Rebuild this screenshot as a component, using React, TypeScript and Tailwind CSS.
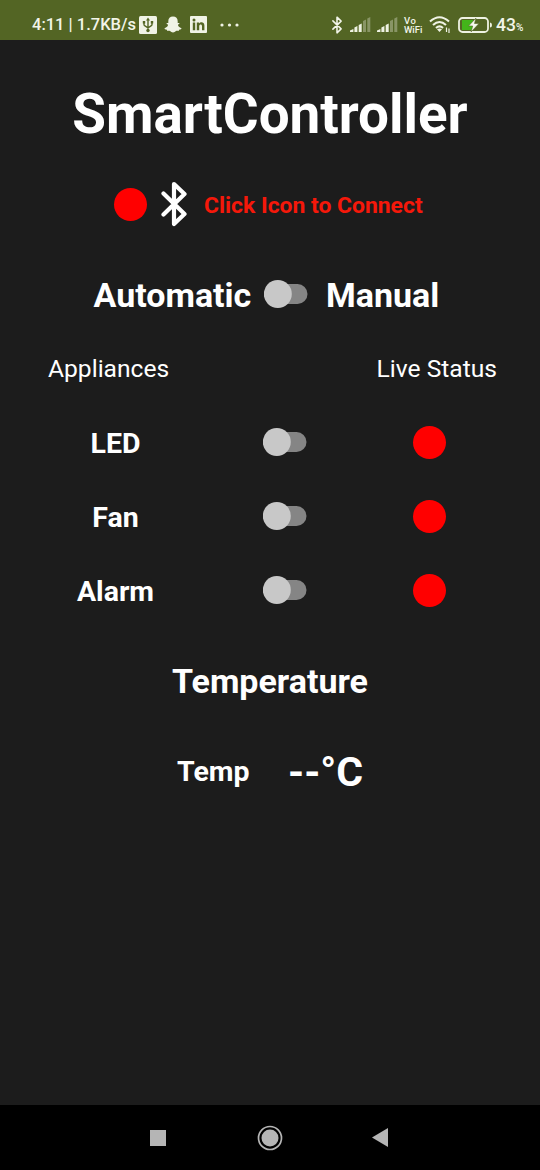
import React from "react";

const Bluetooth = ({ className, sw = 2 }: { className: string; sw?: number }) => (
  <svg className={className} viewBox="0 0 26 46" fill="none" stroke="currentColor" strokeWidth={sw} strokeLinecap="round" strokeLinejoin="round">
    <path d="M2.5 12.5 L23.5 33 L13 43 V3 L23.5 13 L2.5 33.5" />
  </svg>
);

const Dot = () => <span className="block h-[33px] w-[33px] shrink-0 rounded-full bg-[#ff0000]" />;

const Switch = () => (
  <button type="button" role="switch" aria-checked="false" aria-label="switch" className="flex h-7 w-11 shrink-0 items-center">
    <svg className="h-7 w-11" viewBox="0 0 44 28">
      <rect x="8" y="4" width="35.5" height="20" rx="10" fill="#858585" />
      <circle cx="13.8" cy="14" r="14" fill="#c8c8c8" />
    </svg>
  </button>
);

const Signal = () => (
  <svg className="h-[15px] w-[21px] shrink-0" viewBox="0 0 21 15" fill="#eef2e2">
    <path d="M0 15v-1.5L3.4 12v3zM4.4 15v-4.500l3-1.500v6zM8.700 15V8l3-1.500V15z" />
    <path d="M13 15V4l3-1.500V15zM17.300 15V1.500l3-1.500v15z" opacity=".35" />
  </svg>
);

const StatusBar = () => (
  <header className="flex h-10 items-center bg-[#536524] pt-[9px] pl-8 text-[#f2f5e9]">
    <span className="w-[107px] pt-px text-[16.500px] leading-5 font-medium whitespace-nowrap">4:11 | 1.7KB/s</span>
    <svg className="h-[18px] w-[18px] shrink-0" viewBox="0 0 18 18">
      <rect width="18" height="18" rx="1.5" fill="#f0f3e6" />
      <g fill="none" stroke="#536524" strokeWidth="1.4">
        <path d="M9 3v11M5 6v2.400q0 1 1 1.500L9 11.800l3-1.900q1-.5 1-1.500V6" />
      </g>
      <path d="M9 1.500l2 3H7zM3.800 5h2.400v2.400H3.800zM11.800 5h2.400v2.400h-2.400z" fill="#536524" />
      <circle cx="9" cy="14.5" r="1.700" fill="#536524" />
    </svg>
    <svg className="ml-[7px] h-[17px] w-[18px] shrink-0" viewBox="0 0 18 17" fill="#f0f3e6">
      <path d="M9 .5c3 0 4.7 2 4.7 4.8v1.6c.7.1 1.7-.2 1.8.4.1.7-1.2 1-1.5 1.5-.2 1.5 1.5 2.9 3.4 3.4.5.9-.8 1.3-2.3 1.6-.3.5-.1 1-.8 1.1-.9 0-1.6-.2-2.3.2-1 .6-1.7 1.4-3 1.4s-2-.8-3-1.4c-.7-.4-1.4-.2-2.3-.2-.7-.1-.5-.6-.8-1.1C1.400 13.500.1 13.100.6 12.200c1.900-.5 3.600-1.900 3.400-3.400-.3-.5-1.600-.8-1.500-1.500.1-.6 1.100-.3 1.800-.4V5.300C4.300 2.500 6 .5 9 .5z" />
    </svg>
    <svg className="ml-2 h-[17px] w-[17px] shrink-0" viewBox="0 0 17 17">
      <rect width="17" height="17" rx="1" fill="#f0f3e6" />
      <g fill="#536524">
        <circle cx="4" cy="4" r="1.5" />
        <path d="M2.800 6.500h2.400v7.800H2.800zM6.800 6.500h2.300v1.100c1.400-2 5.300-1.800 5.300 2v4.700H12V10c0-2.200-2.800-2-2.800 0v4.300H6.800z" />
      </g>
    </svg>
    <svg className="ml-[13px] h-1 w-[19px] shrink-0" viewBox="0 0 19 4" fill="#f0f3e6">
      <circle cx="2" cy="2" r="1.600" />
      <circle cx="9.500" cy="2" r="1.600" />
      <circle cx="17" cy="2" r="1.600" />
    </svg>
    <Bluetooth className="ml-[92px] h-[18px] w-3 shrink-0" sw={4} />
    <div className="ml-[7px] flex gap-[6px]">
      <Signal />
      <Signal />
    </div>
    <span className="ml-1.5 flex w-5 shrink-0 flex-col text-[9.500px] leading-[9px] font-medium">
      <span className="tracking-[0.500px]">Vo</span>
      <span>WiFi</span>
    </span>
    <svg className="ml-[5px] h-[17px] w-[22px] shrink-0" viewBox="0 0 22 17" fill="none" stroke="#f0f3e6" strokeWidth="2.100">
      <path d="M1 5.500Q10.500-3 20 5.500M4 9Q10.500 3 17 9M7 12Q10.500 8.800 14 12" />
      <path d="M8 13.300Q10.500 11.500 13 13.300L10.500 16z" fill="#f0f3e6" stroke="none" />
      <path d="M17.500 11.500v4.500M20 12.500v4.500" strokeWidth="1.200" />
    </svg>
    <svg className="ml-[7px] h-4 w-[35px] shrink-0" viewBox="0 0 35 16">
      <rect x="4" y="3" width="11" height="10" fill="#43b51a" />
      <rect x="1" y="1" width="29" height="14" rx="3.500" fill="none" stroke="#eef2e2" strokeWidth="1.800" />
      <path d="M32 5.500q2 0 2 2.500T32 10.500z" fill="#eef2e2" />
      <path d="M18 1L10.500 9h4.200L13 15l8-8.500h-4.500z" fill="#f5f8ee" stroke="#536524" strokeWidth=".6" />
    </svg>
    <span className="ml-[3px] flex items-baseline text-[17.500px] leading-5 font-medium whitespace-nowrap">
      43<span className="text-[10px] leading-3">%</span>
    </span>
  </header>
);

export default function App() {
  return (
    <div className="flex h-[1170px] w-[540px] flex-col overflow-hidden bg-[#1c1c1c] font-['Roboto',sans-serif] text-white">
      <StatusBar />
      <main className="flex flex-1 flex-col">
        <h1 className="mt-[38px] text-center text-[54.800px] leading-[72px] font-bold">SmartController</h1>
        <div className="mt-[30px] flex h-12 items-center pl-[114px]">
          <Dot />
          <Bluetooth className="ml-[14px] h-[46px] w-[26px] shrink-0" sw={4.2} />
          <span className="ml-[17px] pt-[3px] text-[22.900px] leading-6 font-bold whitespace-nowrap text-[#f5180a]">Click Icon to Connect</span>
        </div>
        <div className="mt-[42px] flex h-12 items-center pl-[93.500px] text-[34px] leading-10 font-bold">
          <span className="w-[170px] pt-0.5">Automatic</span>
          <Switch />
          <span className="ml-[18.500px] pt-0.5">Manual</span>
        </div>
        <div className="mt-[33px] flex h-9 items-center justify-between pt-px pr-[43px] pl-12 text-[24.600px]">
          <span>Appliances</span>
          <span>Live Status</span>
        </div>
        <div className="mt-[18px] flex flex-col">
          {["LED", "Fan", "Alarm"].map((name) => (
            <div key={name} className="flex h-[74px] items-center">
              <span className="w-[231px] pt-1 text-center text-[28.500px] font-bold">{name}</span>
              <span className="ml-8 w-[150px]">
                <Switch />
              </span>
              <Dot />
            </div>
          ))}
        </div>
        <h2 className="mt-[30px] text-center text-[34px] leading-[48px] font-bold">Temperature</h2>
        <div className="mt-[42px] flex h-12 items-center pl-[177px] font-bold">
          <span className="w-[111px] pt-0.5 text-[28.500px]">Temp</span>
          <span className="pt-[3px] text-[41px] whitespace-nowrap">--°C</span>
        </div>
      </main>
      <nav className="flex h-[65px] items-center justify-between bg-black pr-[152px] pl-[150px]">
        <span className="block h-4 w-4 bg-[#b5b5b5]" />
        <svg className="ml-px h-[26px] w-[26px]" viewBox="0 0 26 26">
          <circle cx="13" cy="13" r="11.500" fill="none" stroke="#b5b5b5" strokeWidth="1.700" />
          <circle cx="13" cy="13" r="8.500" fill="#b5b5b5" />
        </svg>
        <svg className="h-[19px] w-4" viewBox="0 0 16 19" fill="#b5b5b5">
          <path d="M16 0v19L0 9.500z" />
        </svg>
      </nav>
    </div>
  );
}
